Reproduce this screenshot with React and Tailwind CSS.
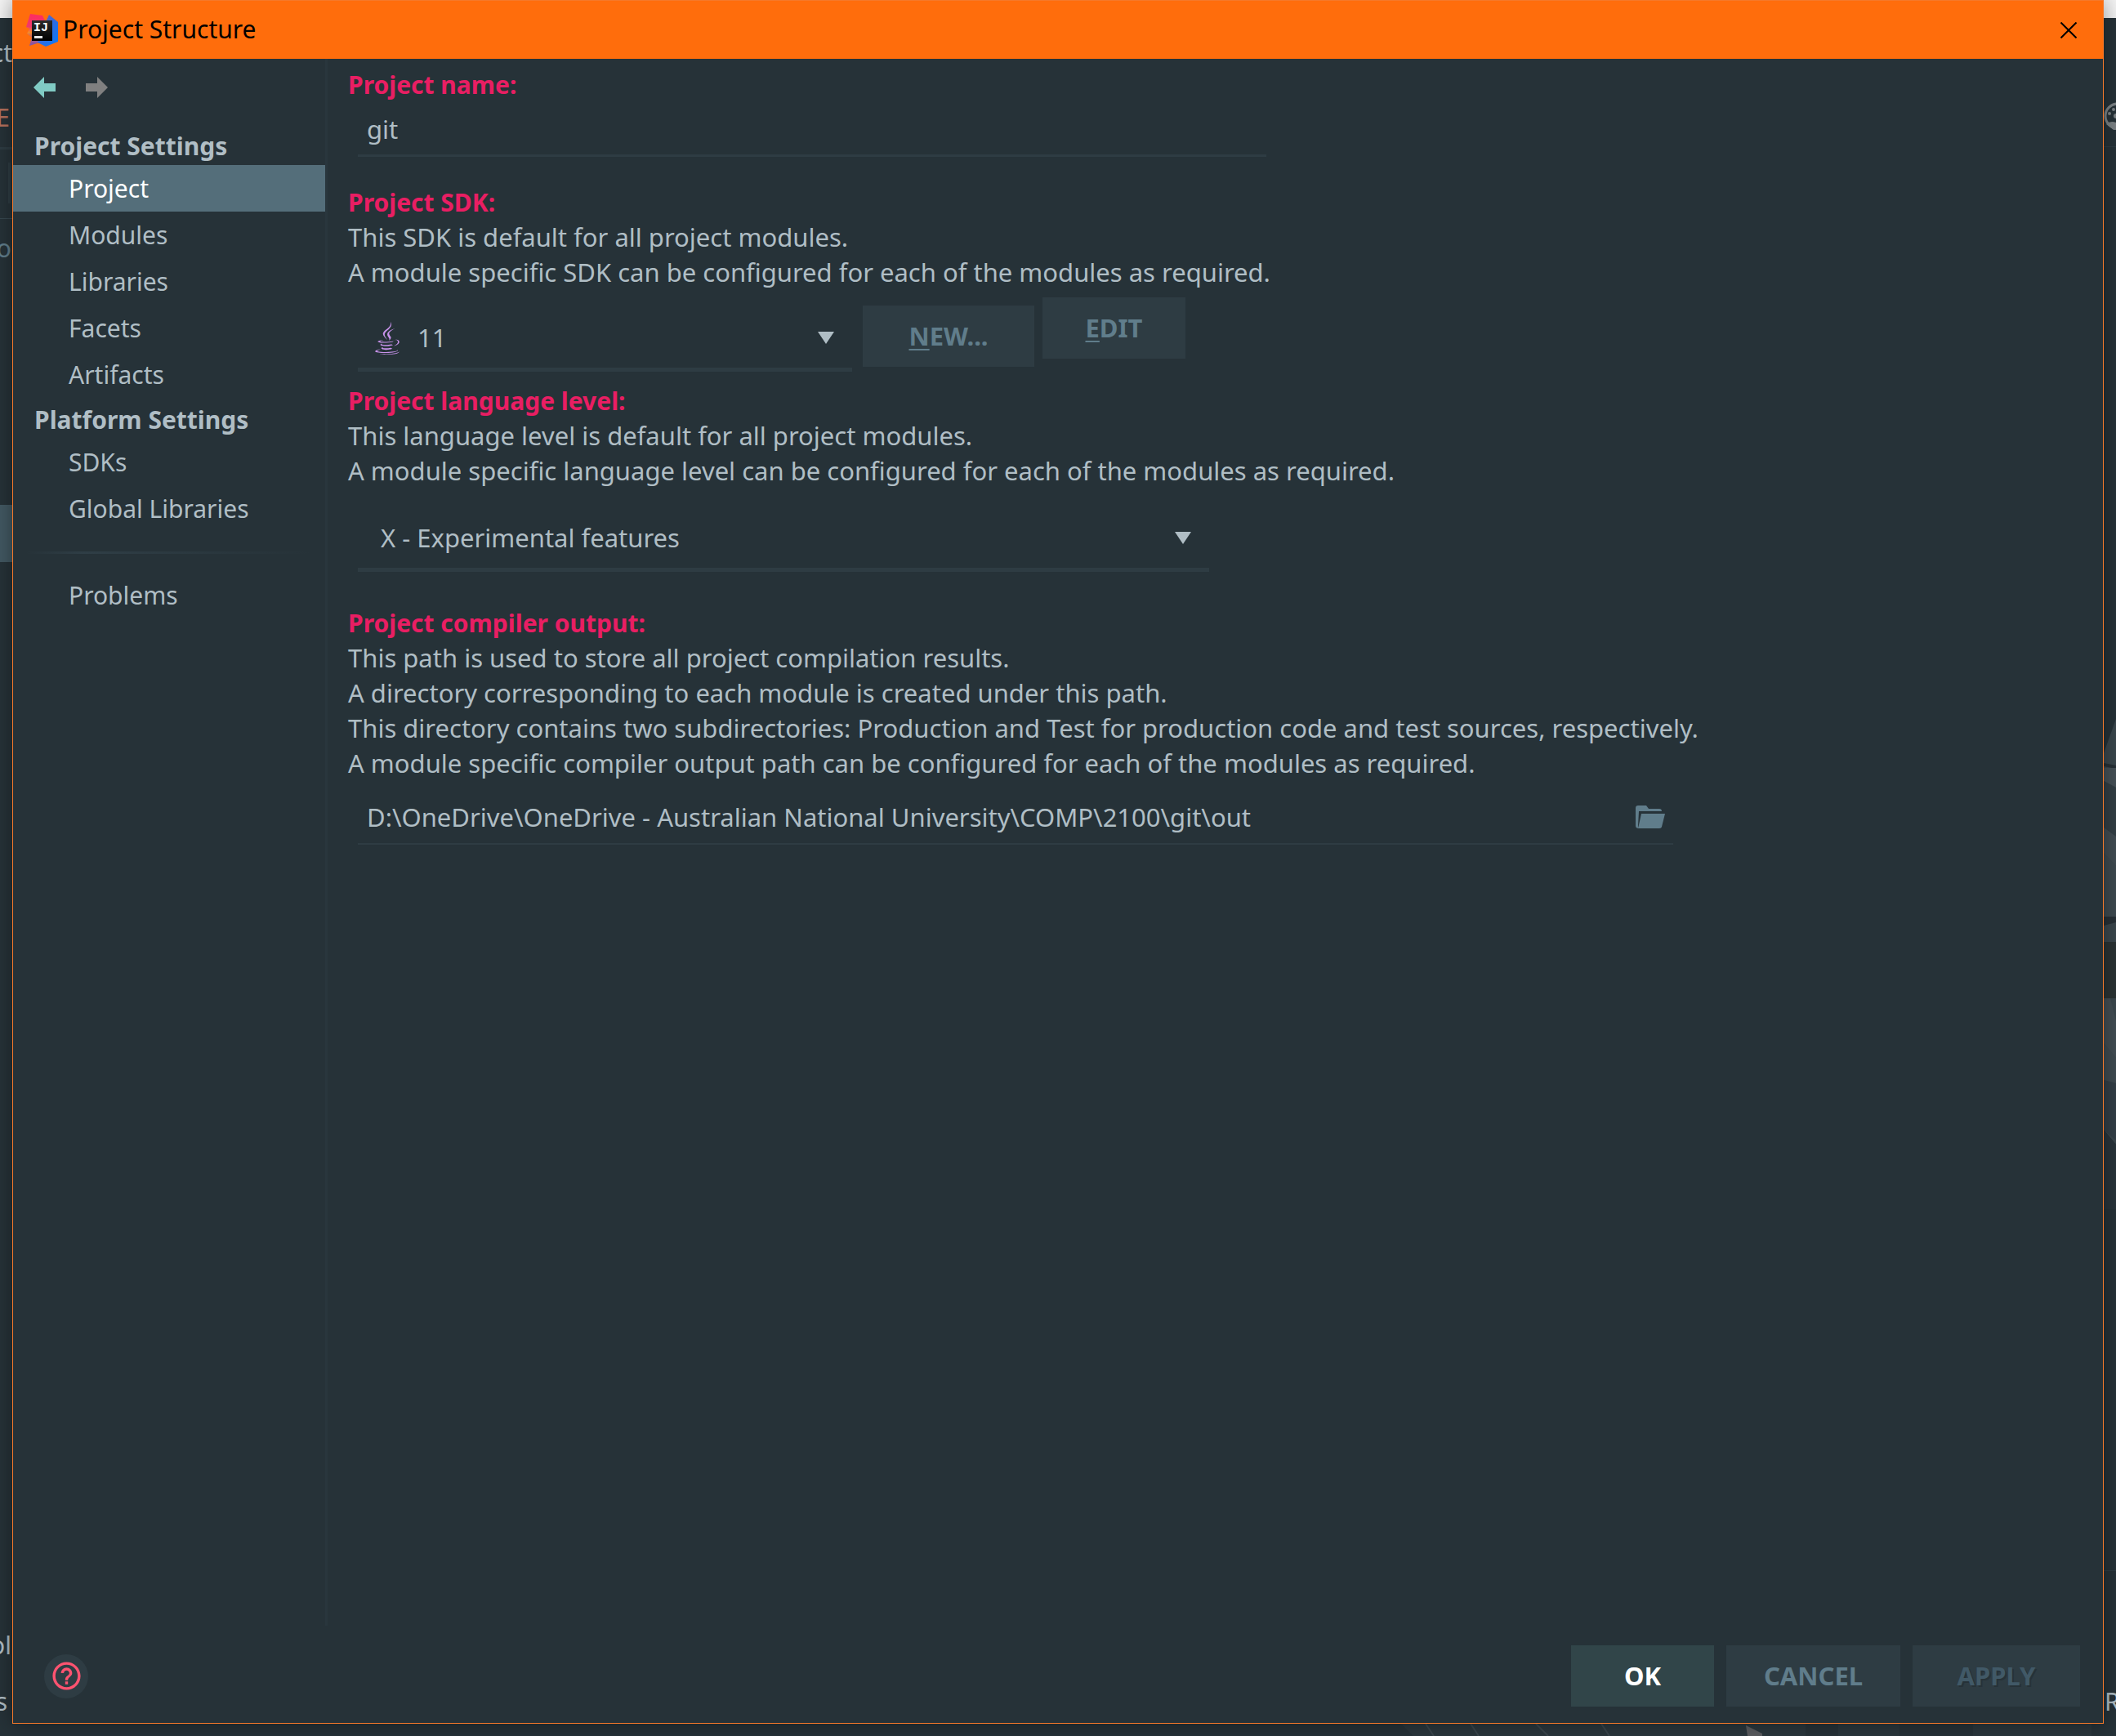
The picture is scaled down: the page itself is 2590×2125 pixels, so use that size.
import { FaJava } from "react-icons/fa";
import { MdHelpOutline } from "react-icons/md";

const FONT = "font-['Noto_Sans','Open_Sans',sans-serif]";

function IdeaLogo() {
  return (
    <svg viewBox="0 0 40 40" className="size-10 shrink-0" aria-hidden="true">
      <defs>
        <linearGradient id="idea-left" x1="0" y1="0" x2="0" y2="1">
          <stop offset="0" stopColor="#fe2d5f" />
          <stop offset="0.4" stopColor="#f0386b" />
          <stop offset="0.58" stopColor="#f68b28" />
          <stop offset="0.72" stopColor="#c0606a" />
          <stop offset="1" stopColor="#7b51b0" />
        </linearGradient>
        <linearGradient id="idea-right" x1="0" y1="0" x2="1" y2="1">
          <stop offset="0" stopColor="#7a5bb8" />
          <stop offset="0.5" stopColor="#2f6be0" />
          <stop offset="1" stopColor="#087cfa" />
        </linearGradient>
        <linearGradient id="idea-box" x1="0" y1="0" x2="0" y2="1">
          <stop offset="0" stopColor="#2b2b2b" />
          <stop offset="1" stopColor="#000000" />
        </linearGradient>
      </defs>
      <path d="M5 0 20 2 24 10 20 34 4 39 7 29 1 24 4 18 0 16Z" fill="url(#idea-left)" />
      <path d="M28 1 39 10 39 34 24 40 14 35 24 10Z" fill="url(#idea-right)" />
      <rect x="7" y="8" width="25" height="25" fill="url(#idea-box)" />
      <text x="9" y="21" fill="#ffffff" fontFamily="Liberation Mono, monospace" fontWeight="700" fontSize="15">
        IJ
      </text>
      <rect x="10" y="27" width="10" height="3" fill="#e6e6e6" />
    </svg>
  );
}

function BackArrow() {
  return (
    <svg viewBox="0 0 28 26" className="h-[26px] w-7" aria-hidden="true">
      <path d="M0 13 13 0V8H27V18H13V26Z" fill="#80cbc4" />
    </svg>
  );
}

function ForwardArrow() {
  return (
    <svg viewBox="0 0 28 26" className="h-[26px] w-7" aria-hidden="true">
      <path d="M27 13 14 0V8H0V18H14V26Z" fill="#808080" />
    </svg>
  );
}

function FolderIcon() {
  return (
    <svg viewBox="0 0 36 28" className="h-7 w-9" aria-hidden="true">
      <path d="M3 0H13L16 4H29Q32 4 32 7H4L3 25Q3 27 4 28 0 28 0 25V3Q0 0 3 0Z" fill="#607d8b" />
      <path d="M7 10H36L32 26Q31.500 28 29 28H3Z" fill="#607d8b" />
    </svg>
  );
}

function Combo({ id, label, options, className, selectClassName, icon }) {
  return (
    <div className={"relative flex items-center border-b-[5px] border-[#2e3c43] pt-[3px] " + className}>
      {icon}
      <select
        id={id}
        aria-label={label}
        className={"h-[73px] w-full appearance-none bg-transparent text-[31px] text-[#b0bec5] outline-none " + selectClassName}
      >
        {options.map((o) => (
          <option key={o}>{o}</option>
        ))}
      </select>
      <svg viewBox="0 0 20 15" className="pointer-events-none absolute right-[22px] h-[15px] w-5" aria-hidden="true">
        <path d="M0 0H20L10 15Z" fill="#b0bec5" />
      </svg>
    </div>
  );
}

function NavGroup({ title, items, current }) {
  return (
    <section>
      <h2 className="h-[50px] pl-[26px] font-bold leading-[53px]">{title}</h2>
      <NavList items={items} current={current} />
    </section>
  );
}

function NavList({ items, current }) {
  return (
    <ul>
      {items.map((item) => (
        <li key={item}>
          <a
            href="#"
            className={
              "block pl-[68px] leading-[57px] " + (item === current ? "bg-[#546e7a] text-white" : "text-[#b0bec5]")
            }
          >
            {item}
          </a>
        </li>
      ))}
    </ul>
  );
}

function Info({ title, htmlFor, lines, className = "" }) {
  return (
    <div className={"leading-[43px] " + className}>
      <label htmlFor={htmlFor} className="block font-bold text-[#e91e63]">
        {title}
      </label>
      {lines.map((line) => (
        <p key={line} className="text-[31px]">
          {line}
        </p>
      ))}
    </div>
  );
}

function LeftEdge() {
  return (
    <div className="flex w-[15px] shrink-0 flex-col overflow-hidden" aria-hidden="true">
      <div className="h-[22px] bg-[#f4f4f4]" />
      <div className="mt-[21px] flex h-11 justify-end leading-[44px]">ct</div>
      <div className="mt-[35px] flex h-11 justify-end pr-[3px] leading-[44px] text-[#b5705c]">E</div>
      <div className="mt-[14px] h-[3px] bg-[#2e3c43]" />
      <div className="mr-[2px] mt-4 h-[50px] w-[3px] self-end bg-[#2e3c43]" />
      <div className="mt-[18px] h-px bg-[#37474f]" />
      <div className="mt-[14px] flex h-11 justify-end pr-px leading-[44px] text-[#607d8b]">o</div>
      <div className="mt-[292px] h-[70px] bg-[#425862]" />
      <div className="mt-auto flex h-11 justify-end pr-px leading-[44px]">ol</div>
      <div className="mb-[20px] mt-[25px] flex h-11 justify-end pr-[6px] leading-[44px]">s</div>
    </div>
  );
}

function RightEdge() {
  return (
    <div className="flex w-[15px] shrink-0 flex-col overflow-hidden" aria-hidden="true">
      <div className="h-[22px] bg-[#f4f4f4]" />
      <svg viewBox="0 0 15 34" className="mt-[103px] h-[34px] w-[15px]">
        <circle cx="17" cy="17" r="15" fill="none" stroke="#7d8487" strokeWidth="3" />
        <circle cx="7" cy="14" r="2" fill="#7d8487" />
        <circle cx="12" cy="9" r="2" fill="#7d8487" />
        <circle cx="15" cy="17" r="3" fill="#7d8487" />
        <path d="M3 27Q8 22 15 25V34H12Z" fill="#7d8487" />
      </svg>
      <div className="mt-5 h-px bg-[#2e3c43]" />
      <svg viewBox="0 0 15 600" className="mt-[700px] h-[600px] w-[15px]" preserveAspectRatio="none">
        <path d="M15 0V521L0 503V42Z" fill="#3b474d" />
        <path d="M0 54 15 57V61L0 58Z" fill="#273036" />
        <path d="M0 60H15V84L0 76Z" fill="#465157" />
        <path d="M0 76 15 84V144L0 133Z" fill="#333f45" />
        <path d="M0 133 15 144V180L0 164Z" fill="#424d53" />
        <path d="M0 164 15 180V242H0Z" fill="#3e4a50" />
        <path d="M0 242H15V249L0 253Z" fill="#273036" />
        <rect y="273" width="15" height="69" fill="#2b3334" />
        <path d="M0 342H8L15 370V415L0 397Z" fill="#434e54" />
        <path d="M0 397 15 415V446L0 442Z" fill="#3f4b51" />
        <path d="M0 442 15 446V516L0 503Z" fill="#333f47" />
        <path d="M0 503 15 521V600H0Z" fill="#29343b" />
      </svg>
      <div className="mt-[442px] h-px bg-[#2e3c43]" />
      <div className="mb-[20px] mt-auto h-11 pl-px leading-[44px]">R</div>
    </div>
  );
}

export default function App() {
  return (
    <div className={"flex min-h-screen bg-[#263238] text-[30px] text-[#b0bec5] " + FONT}>
      <LeftEdge />

      <div className="flex min-w-0 flex-1 flex-col">
        <div className="relative z-10 flex flex-1 flex-col border border-[#f5792a] bg-[#263238] shadow-[0_0_24px_rgba(0,0,0,0.4)]">
          <header className="flex h-[71px] items-center bg-[#ff6d0c] pl-4 pr-8 text-black">
            <IdeaLogo />
            <h1 className="ml-[5px] flex-1 leading-[42px] pb-[2px]">Project Structure</h1>
            <button type="button" aria-label="Close" className="flex">
              <svg viewBox="0 0 20 20" className="size-5" aria-hidden="true">
                <path d="M0.500 0.500 19.500 19.500M19.500 0.500 0.500 19.500" stroke="#000" strokeWidth="2" />
              </svg>
            </button>
          </header>

          <div className="flex flex-1">
            <nav className="w-[385px] shrink-0 border-r-[3px] border-[#29363d]">
              <div className="flex h-20 items-start gap-9 pl-[25px] pt-[22px]">
                <button type="button" aria-label="Back">
                  <BackArrow />
                </button>
                <button type="button" aria-label="Forward" disabled>
                  <ForwardArrow />
                </button>
              </div>
              <NavGroup
                title="Project Settings"
                items={["Project", "Modules", "Libraries", "Facets", "Artifacts"]}
                current="Project"
              />
              <NavGroup title="Platform Settings" items={["SDKs", "Global Libraries"]} />
              <div className="mx-4 mb-[22px] mt-6 h-[3px] bg-linear-to-r from-transparent via-[#2f3e46] via-20% to-transparent" />
              <NavList items={["Problems"]} />
            </nav>

            <main className="min-w-0 flex-1 pl-[25px] pt-[10px]">
              <Info title="Project name:" htmlFor="name" lines={[]} />
              <div className="pl-3 pr-8">
                <input
                  id="name"
                  defaultValue="git"
                  className="block h-[67px] w-full max-w-[1112px] border-b-[3px] border-[#2e3c43] bg-transparent px-[11px] pt-[2px] text-[31px] outline-none"
                />
              </div>

              <Info
                className="mt-[34px]"
                title="Project SDK:"
                htmlFor="sdk"
                lines={[
                  "This SDK is default for all project modules.",
                  "A module specific SDK can be configured for each of the modules as required.",
                ]}
              />
              <div className="mt-[9px] flex items-start pl-3">
                <Combo
                  id="sdk"
                  label="Project SDK"
                  className="mt-[10px] w-[605px]"
                  selectClassName="pl-[73px]"
                  options={["11"]}
                  icon={<FaJava className="pointer-events-none absolute left-[21px] h-10 w-[30px] text-[#c792ea]" />}
                />
                <button
                  type="button"
                  className="ml-[13px] mt-[10px] h-[75px] w-[210px] bg-[#2e3c43] text-[31px] font-bold text-[#607d8b]"
                >
                  <span className="underline decoration-2 underline-offset-4">N</span>EW...
                </button>
                <button
                  type="button"
                  className="ml-[10px] h-[75px] w-[175px] bg-[#2e3c43] text-[31px] font-bold text-[#607d8b]"
                >
                  <span className="underline decoration-2 underline-offset-4">E</span>DIT
                </button>
              </div>

              <Info
                className="mt-[14px]"
                title="Project language level:"
                htmlFor="level"
                lines={[
                  "This language level is default for all project modules.",
                  "A module specific language level can be configured for each of the modules as required.",
                ]}
              />
              <div className="mt-[21px] pl-3 pr-8">
                <Combo
                  id="level"
                  label="Project language level"
                  className="w-full max-w-[1042px]"
                  selectClassName="pl-[28px]"
                  options={["X - Experimental features"]}
                />
              </div>

              <Info
                className="mt-[41px]"
                title="Project compiler output:"
                htmlFor="output"
                lines={[
                  "This path is used to store all project compilation results.",
                  "A directory corresponding to each module is created under this path.",
                  "This directory contains two subdirectories: Production and Test for production code and test sources, respectively.",
                  "A module specific compiler output path can be configured for each of the modules as required.",
                ]}
              />
              <div className="mt-3 pl-3 pr-8">
                <div className="flex w-full max-w-[1610px] items-center border-b-2 border-[#2e3c43] pr-[10px]">
                  <input
                    id="output"
                    defaultValue="D:\OneDrive\OneDrive - Australian National University\COMP\2100\git\out"
                    className="h-16 min-w-0 flex-1 bg-transparent px-[11px] text-[31px] outline-none"
                  />
                  <button type="button" aria-label="Browse">
                    <FolderIcon />
                  </button>
                </div>
              </div>
            </main>
          </div>

          <footer className="flex items-center gap-[15px] pb-5 pl-[38px] pr-7 pt-6 text-[31px]">
            <button
              type="button"
              aria-label="Help"
              className="mr-auto flex size-[54px] items-center justify-center rounded-full bg-[#2e3c43]"
            >
              <MdHelpOutline className="size-[41px] text-[#ff5370]" />
            </button>
            <button type="button" className="h-[75px] w-[175px] bg-[#314549] font-bold text-white">
              OK
            </button>
            <button type="button" className="h-[75px] w-[213px] bg-[#2e3c43] font-bold text-[#607d8b]">
              CANCEL
            </button>
            <button
              type="button"
              disabled
              className="h-[75px] w-[205px] bg-[#2e3c43] font-bold text-[#415967] [text-shadow:2px_2px_0_#263238]"
            >
              APPLY
            </button>
          </footer>
        </div>

        <div className="h-[15px] overflow-hidden bg-[#263238]" aria-hidden="true">
          <svg viewBox="0 0 2560 15" className="h-[15px] w-full" preserveAspectRatio="none">
            <path d="M1700 0H2545V15H1715Z" fill="#2b373d" />
            <path d="M1730 0 1740 15M1785 0 1795 15M1865 0 1880 15M1945 0 1955 15" stroke="#3a464c" strokeWidth="2" />
            <path d="M2122 2 2142 12V15H2124Z" fill="#5b5d60" />
            <path d="M2195 0H2235V15H2195ZM2310 0H2400V15H2310Z" fill="#273238" />
          </svg>
        </div>
      </div>

      <RightEdge />
    </div>
  );
}
